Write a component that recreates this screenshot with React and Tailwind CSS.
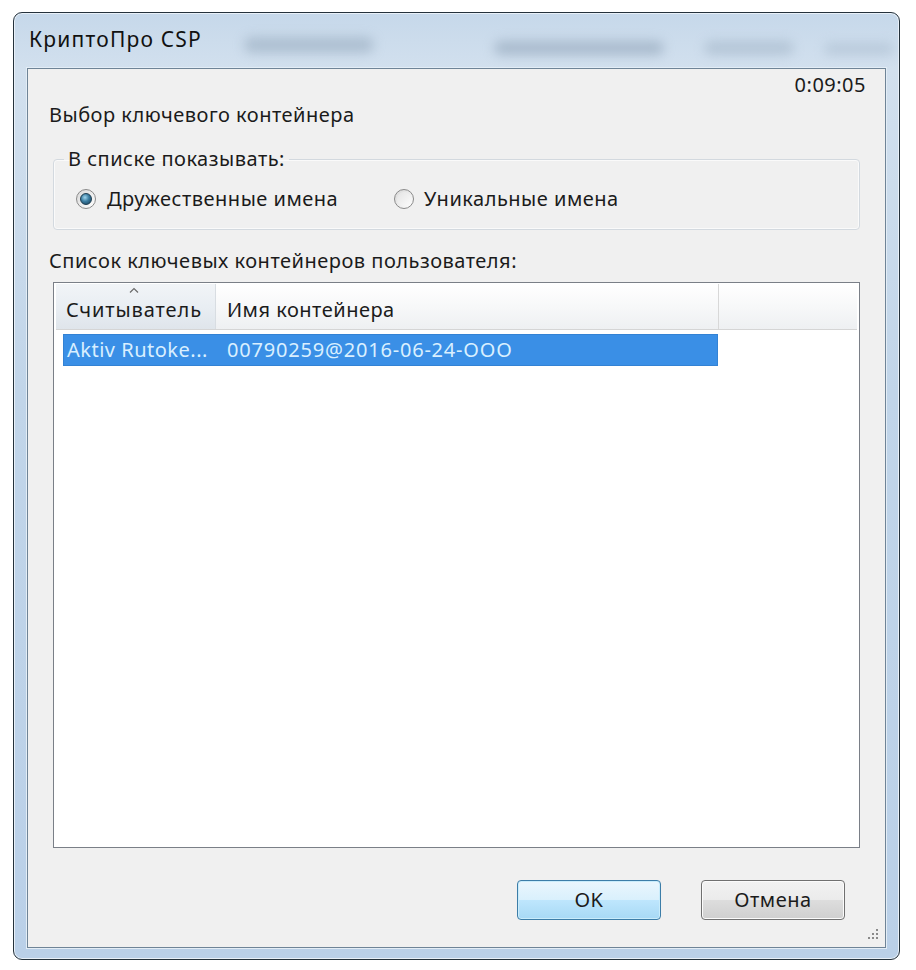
import React from "react";

const font = { fontFamily: '"Noto Sans", "Open Sans", sans-serif' };

function Radio({ checked }) {
  return (
    <span className="relative inline-flex h-[20px] w-[20px] shrink-0 items-center justify-center rounded-full border border-[#8a8a8a] bg-[linear-gradient(135deg,#d8d8d8,#ffffff)]">
      {checked ? (
        <span className="h-[12px] w-[12px] rounded-full border border-[#1c3c50] bg-[radial-gradient(circle_at_40%_35%,#9fd6ee_0%,#3a7ca0_45%,#163c55_100%)]" />
      ) : (
        <span className="h-[14px] w-[14px] rounded-full bg-[linear-gradient(135deg,#e4e4e4,#fbfbfb)]" />
      )}
    </span>
  );
}

export default function App() {
  return (
    <div className="h-[970px] w-[916px] bg-white pl-[13px] pt-[12px] text-[#1b1b1b]" style={font}>
      <div className="relative flex h-[948px] w-[887px] flex-col overflow-hidden rounded-[9px] border border-[#25323c] bg-[linear-gradient(180deg,#c6d8ea_0%,#d2e0ee_6%,#c1d5e9_40%,#bad0e8_100%)] px-[13px] pb-[11px] shadow-[inset_0_0_0_1px_#e8f0f8]">
        <div className="pointer-events-none absolute left-[230px] top-[24px] h-[16px] w-[130px] rounded-full bg-[#8ea2b6] opacity-50 blur-[6px]" />
        <div className="pointer-events-none absolute left-[480px] top-[28px] h-[14px] w-[170px] rounded-full bg-[#8498ad] opacity-50 blur-[6px]" />
        <div className="pointer-events-none absolute left-[690px] top-[28px] h-[14px] w-[90px] rounded-full bg-[#8ea2b6] opacity-40 blur-[6px]" />
        <div className="pointer-events-none absolute left-[810px] top-[30px] h-[12px] w-[70px] rounded-full bg-[#9aadc0] opacity-40 blur-[6px]" />
        <div className="relative flex h-[55px] items-center pl-[2px] pb-[1px] text-[21px] tracking-[1.2px] text-[#111]">
          КриптоПро CSP
        </div>
        <div className="relative flex flex-1 flex-col border border-[#6f8497] bg-[#f0f0f0] text-[20px] tracking-[0.5px] shadow-[0_0_0_1px_#e3edf6]">
          <div className="mt-[3px] pr-[19px] text-right leading-[26px]">0:09:05</div>
          <div className="ml-[21px] mt-[4px] leading-[26px]">Выбор ключевого контейнера</div>
          <fieldset className="mx-[25px] mt-[18px] h-[84px] rounded-[4px] border border-[#d3d9df] px-[10px] pb-[16px] shadow-[inset_0_0_0_1px_#fafafa]">
            <legend className="px-[4px] leading-[26px]">В списке показывать:</legend>
            <div className="mt-[14px] flex h-[26px] items-center pl-[12px]">
              <div className="flex w-[318px] items-center gap-[11px]">
                <Radio checked />
                <span>Дружественные имена</span>
              </div>
              <div className="flex items-center gap-[10px]">
                <Radio />
                <span>Уникальные имена</span>
              </div>
            </div>
          </fieldset>
          <div className="ml-[21px] mt-[18px] leading-[26px]">Список ключевых контейнеров пользователя:</div>
          <div className="mx-[25px] mt-[8px] flex h-[566px] flex-col border border-[#7a7f87] bg-white px-[2px] pt-[1px]">
            <div className="flex h-[46px] border-b border-[#d5d5d5]">
              <div className="relative flex w-[160px] items-center border-r border-[#d8dde2] bg-[linear-gradient(180deg,#f1f4f7_0%,#e9eef3_50%,#dfe5eb_100%)] pl-[10px] pt-[7px] tracking-[0.9px]">
                <svg className="absolute left-[73px] top-[3px]" width="10" height="6" viewBox="0 0 10 6">
                  <path d="M1 5.5 L5 1.5 L9 5.5" fill="none" stroke="#6a6a6a" strokeWidth="1.2" />
                </svg>
                Считыватель
              </div>
              <div className="flex w-[503px] items-center border-r border-[#d8d8d8] bg-[linear-gradient(180deg,#ffffff_0%,#f7f8f9_50%,#eef0f2_100%)] pl-[11px] pt-[7px]">
                Имя контейнера
              </div>
              <div className="flex-1 bg-[linear-gradient(180deg,#ffffff_0%,#f7f8f9_50%,#eef0f2_100%)]" />
            </div>
            <div className="ml-[7px] mt-[4px] flex h-[32px] w-[655px] items-center bg-[#3a8fe6] text-[#d9efff] shadow-[inset_0_0_0_1px_#3382d4]">
              <span className="w-[164px] whitespace-nowrap pl-[4px]">Aktiv Rutoke...</span>
              <span className="whitespace-nowrap tracking-[0.8px]">00790259@2016-06-24-OOO</span>
            </div>
          </div>
          <div className="mr-[40px] mt-[32px] flex justify-end gap-[40px]">
            <div className="flex h-[40px] w-[144px] items-center justify-center rounded-[4px] border border-[#3c7da8] bg-[linear-gradient(180deg,#eaf6fd_0%,#d9f0fc_50%,#bee6fd_51%,#a7d9f5_100%)] shadow-[inset_0_0_0_1px_#c9ecfb]">
              OK
            </div>
            <div className="flex h-[40px] w-[144px] items-center justify-center rounded-[4px] border border-[#707070] bg-[linear-gradient(180deg,#f2f2f2_0%,#ebebeb_50%,#dddddd_51%,#cfcfcf_100%)] shadow-[inset_0_0_0_1px_#fbfbfb]">
              Отмена
            </div>
          </div>
          <svg className="absolute bottom-[6px] right-[6px]" width="14" height="14" viewBox="0 0 14 14">
            <g fill="#8a8a8a">
              <rect x="11" y="2" width="2" height="2" />
              <rect x="7" y="6" width="2" height="2" />
              <rect x="11" y="6" width="2" height="2" />
              <rect x="3" y="10" width="2" height="2" />
              <rect x="7" y="10" width="2" height="2" />
              <rect x="11" y="10" width="2" height="2" />
            </g>
          </svg>
        </div>
      </div>
    </div>
  );
}
